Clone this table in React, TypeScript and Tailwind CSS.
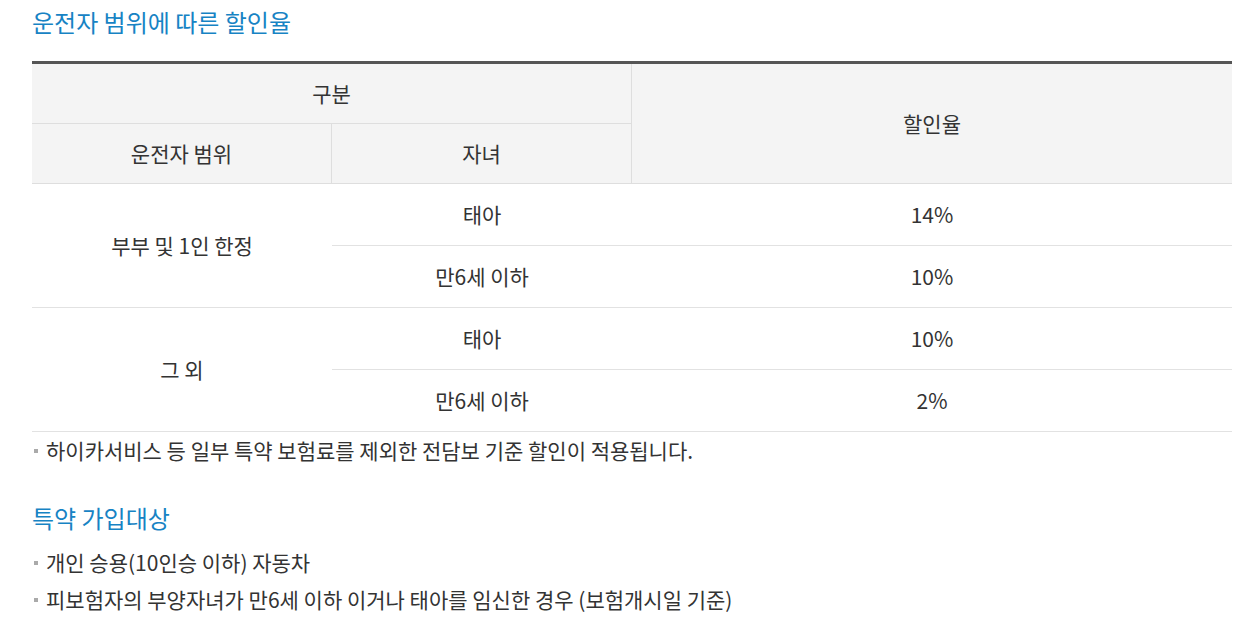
import React from 'react';

const font = { fontFamily: '"Noto Sans CJK KR", "Noto Sans", sans-serif' };

function Bullet({ children }: { children: React.ReactNode }) {
  return (
    <li className="flex items-center text-[21px] leading-[37px] text-[#333]">
      <span className="mr-[8px] ml-[2px] inline-block h-[4px] w-[4px] bg-[#aaa]" />
      {children}
    </li>
  );
}

export default function App() {
  const head = 'flex items-center justify-center bg-[#f4f4f4] text-[21px] text-[#333] border-[#dedede]';
  const cell = 'flex items-center justify-center text-[21px] text-[#333] border-[#e2e2e2]';

  return (
    <div className="bg-white min-h-screen px-[32px] pt-[6px]" style={font}>
      <div className="w-[1200px]">
        {/* 운전자 범위 */}
        <h3 className="text-[24px] leading-[32px] text-[#1783c4]">운전자 범위에 따른 할인율</h3>

        <div className="mt-[23px] border-t-[3px] border-[#555] grid grid-cols-[300px_300px_600px]">
          <div className={`${head} col-span-2 h-[60px] border-b border-r`}>구분</div>
          <div className={`${head} row-span-2 border-b`}>할인율</div>
          <div className={`${head} h-[60px] border-b border-r`}>운전자 범위</div>
          <div className={`${head} h-[60px] border-b border-r`}>자녀</div>

          <div className={`${cell} row-span-2 border-b`}>부부 및 1인 한정</div>
          <div className={`${cell} h-[62px] border-b`}>태아</div>
          <div className={`${cell} h-[62px] border-b border-[#dadada]`}>14%</div>
          <div className={`${cell} h-[62px] border-b`}>만6세 이하</div>
          <div className={`${cell} h-[62px] border-b border-[#dadada]`}>10%</div>

          <div className={`${cell} row-span-2 border-b`}>그 외</div>
          <div className={`${cell} h-[62px] border-b`}>태아</div>
          <div className={`${cell} h-[62px] border-b border-[#dadada]`}>10%</div>
          <div className={`${cell} h-[62px] border-b`}>만6세 이하</div>
          <div className={`${cell} h-[62px] border-b border-[#dadada]`}>2%</div>
        </div>

        <ul>
          <Bullet>하이카서비스 등 일부 특약 보험료를 제외한 전담보 기준 할인이 적용됩니다.</Bullet>
        </ul>

        {/* 특약 가입대상 */}
        <h3 className="mt-[33px] text-[24px] leading-[32px] text-[#1783c4]">특약 가입대상</h3>
        <ul className="mt-[10px]">
          <Bullet>개인 승용(10인승 이하) 자동차</Bullet>
          <Bullet>피보험자의 부양자녀가 만6세 이하 이거나 태아를 임신한 경우 (보험개시일 기준)</Bullet>
        </ul>
      </div>
    </div>
  );
}
